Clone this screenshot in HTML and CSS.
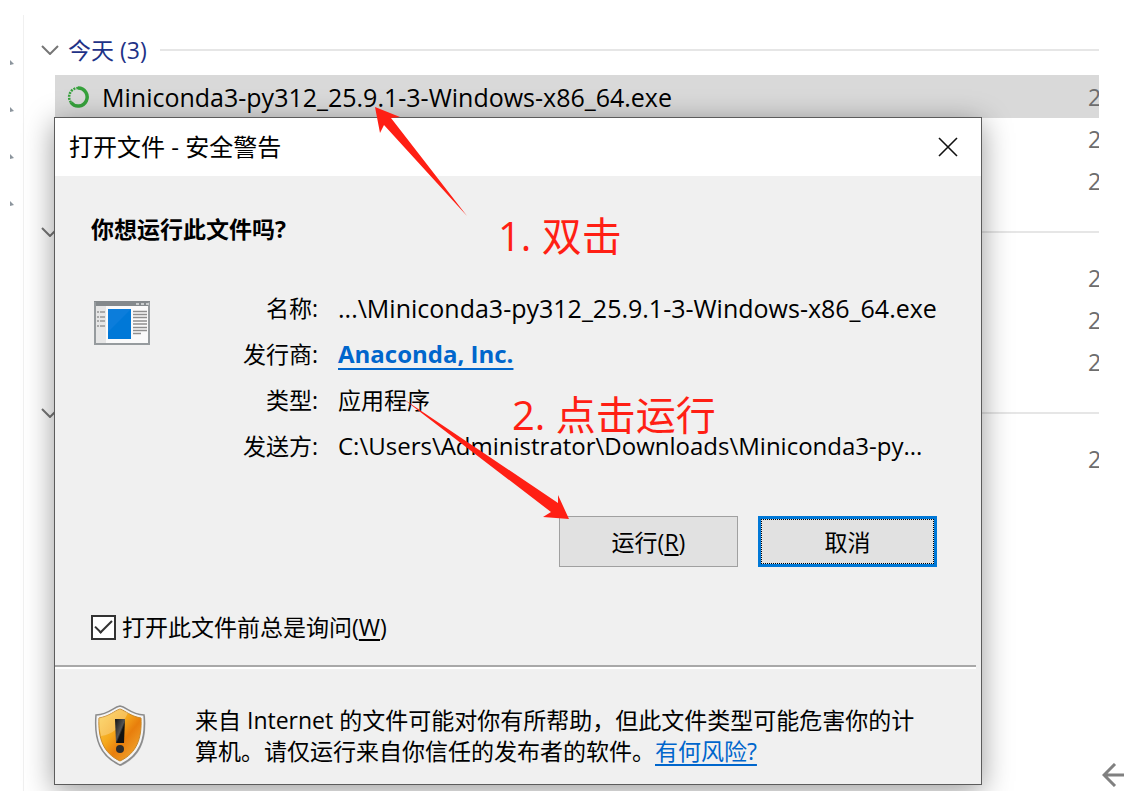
FILE: index.html
```html
<!DOCTYPE html>
<html lang="zh-CN">
<head>
<meta charset="utf-8">
<title>打开文件 - 安全警告</title>
<link rel="stylesheet" href="styles.css">
</head>
<body>
<div class="page">
  <main class="explorer">
    <nav class="tree" aria-label="导航">
      <svg class="tree-mark" viewBox="0 0 4 6"><path d="M0 0L4 4L0 5Z"/></svg>
      <svg class="tree-mark" viewBox="0 0 4 6"><path d="M0 0L4 4L0 5Z"/></svg>
      <svg class="tree-mark" viewBox="0 0 4 6"><path d="M0 0L4 4L0 5Z"/></svg>
      <svg class="tree-mark" viewBox="0 0 4 6"><path d="M0 0L4 4L0 5Z"/></svg>
    </nav>
    <section class="files">
      <h2 class="group">
        <svg class="chevron" viewBox="0 0 18 10"><path d="M1 1L9 9L17 1"/></svg>
        <span>今天 (3)</span>
      </h2>
      <div class="row selected">
        <svg class="spinner" viewBox="0 0 24 24">
          <path d="M12 3A9 9 0 1 1 5 17.500" stroke-width="3.500"/>
          <path d="M5 17.500A9 9 0 0 1 12 3" stroke-width="2.500" stroke-dasharray="2 1"/>
        </svg>
        <span class="name">Miniconda3-py312_25.9.1-3-Windows-x86_64.exe</span>
        <span class="date">2</span>
      </div>
      <div class="row"><span class="date">2</span></div>
      <div class="row"><span class="date">2</span></div>
      <h2 class="group">
        <svg class="chevron" viewBox="0 0 18 10"><path d="M1 1L9 9L17 1"/></svg>
      </h2>
      <div class="row"><span class="date">2</span></div>
      <div class="row"><span class="date">2</span></div>
      <div class="row"><span class="date">2</span></div>
      <h2 class="group">
        <svg class="chevron" viewBox="0 0 18 10"><path d="M1 1L9 9L17 1"/></svg>
      </h2>
      <div class="row"><span class="date">2</span></div>
    </section>

    <section class="dialog" role="dialog" aria-labelledby="dialog-title">
      <header class="titlebar">
        <h1 class="title" id="dialog-title">打开文件 - 安全警告</h1>
        <button class="close" type="button" aria-label="关闭">
          <svg viewBox="0 0 20 20"><path d="M1 1L19 19M19 1L1 19" stroke-width="1.600"/></svg>
        </button>
      </header>
      <div class="content">
        <p class="question">你想运行此文件吗?</p>
        <div class="info">
          <svg class="app-icon" viewBox="0 0 56 44">
            <rect x="0.500" y="0.500" width="55" height="43" fill="#fafafa" stroke="#8a8f93"/>
            <rect x="1" y="5" width="11" height="37" fill="#e6e6e6"/>
            <rect width="56" height="5" fill="#84898c"/>
            <path d="M1 1V43H55V1" fill="none" stroke="#969b9e" stroke-width="2"/>
            <path d="M42 3h3M47 3h3M52 3h3" stroke="#c9cccd" stroke-width="2"/>
            <path d="M3 11h2M6 11h5M3 16h2M6 16h5M3 20h2M6 20h5M3 25h2M6 25h5" stroke="#969696" stroke-width="1.500"/>
            <rect x="14" y="8" width="23" height="30" fill="#0078d7"/>
            <path d="M14 8H37L14 31Z" fill="#0c7ddb"/>
            <path d="M39 10.500h14M39 13.500h14M39 16.500h14M39 20h14M39 23h14M39 26.500h14M39 29.500h14M39 32.500h8" stroke="#8e8e8e" stroke-width="1.300"/>
          </svg>
          <dl class="details">
            <dt>名称:</dt><dd class="name">...\Miniconda3-py312_25.9.1-3-Windows-x86_64.exe</dd>
            <dt>发行商:</dt><dd><a class="publisher" href="#">Anaconda, Inc.</a></dd>
            <dt>类型:</dt><dd>应用程序</dd>
            <dt>发送方:</dt><dd class="path">C:\Users\Administrator\Downloads\Miniconda3-py...</dd>
          </dl>
        </div>
        <div class="actions">
          <button class="button" type="button">运行(<u>R</u>)</button>
          <button class="button primary" type="button">取消</button>
        </div>
        <label class="ask"><input class="check" type="checkbox" checked><span>打开此文件前总是询问(<u>W</u>)</span></label>
      </div>
      <footer class="warning">
        <svg class="shield" viewBox="0 0 54 62">
          <defs>
            <linearGradient id="gold" x1="0" y1="0" x2="1" y2="1">
              <stop offset="0" stop-color="#fbd04a"/><stop offset="0.400" stop-color="#f5a81c"/>
              <stop offset="0.600" stop-color="#e87e0c"/><stop offset="1" stop-color="#f4b43c"/>
            </linearGradient>
            <linearGradient id="ink" x1="0" y1="0" x2="1" y2="1">
              <stop offset="0" stop-color="#111"/><stop offset="0.500" stop-color="#555"/><stop offset="0.600" stop-color="#111"/>
            </linearGradient>
          </defs>
          <path d="M26 1C19 2 16 9 2 10C0 34 6 51 26 60C46 51 52 34 50 10C36 9 33 2 26 1Z" fill="#aaa" transform="translate(1 1)"/>
          <path d="M26 1C19 2 16 9 2 10C0 34 6 51 26 60C46 51 52 34 50 10C36 9 33 2 26 1Z" fill="#f4f4f4" stroke="#8b8b8b" stroke-width="1.500"/>
          <path d="M26 4C20 6 16 11 5 13C4 33 9 48 26 56C43 48 48 33 47 13C36 11 32 6 26 4Z" fill="url(#gold)" stroke="#c88a2c"/>
          <path d="M26 4C20 6 16 11 5 13Q5 22 7 31Q24 29 34 8Q29 6 26 4Z" fill="#fff" opacity="0.250"/>
          <path d="M21 14H31L30 38H22Z" fill="url(#ink)"/>
          <circle cx="26" cy="44" r="4" fill="#2c2c2c"/>
        </svg>
        <p class="warning-text">来自 Internet 的文件可能对你有所帮助，但此文件类型可能危害你的计算机。请仅运行来自你信任的发布者的软件。<a class="risk" href="#">有何风险?</a></p>
      </footer>
    </section>

    <svg class="arrow arrow-open" viewBox="0 0 92 110"><path d="M0 0L25 10L16 11L92 109L9 18L5 26Z"/></svg>
    <p class="note note-open">1. 双击</p>
    <svg class="arrow arrow-run" viewBox="0 0 170 121"><path d="M2 0L158 105L158 97L169 121L143 119L151 114Z"/></svg>
    <p class="note note-run">2. 点击运行</p>
  </main>
  <aside class="gutter">
    <svg class="back" viewBox="0 0 22 24"><path d="M22 12H2M13 1L2 12L13 23"/></svg>
  </aside>
</div>
</body>
</html>
```
FILE: styles.css
```css
*, *::before, *::after { box-sizing: border-box; }

body {
  margin: 0;
  background: #fff;
  color: #000;
  font: 23px/32px "Open Sans", "Noto Sans CJK SC", sans-serif;
}

h1, h2, p, dl, dd { margin: 0; font-size: inherit; font-weight: normal; }
svg { display: block; flex: none; }

.page { display: flex; min-height: 100vh; padding: 15px 0 7px; }
.explorer { position: relative; display: flex; flex: 1; min-width: 0; overflow: hidden; }

.tree {
  display: flex;
  flex-direction: column;
  gap: 41px;
  width: 24px;
  padding: 45px 0 0 10px;
  border-right: 1px solid #f0f0f0;
}
.tree-mark { width: 4px; height: 6px; fill: #8c959d; }

.files { flex: 1; min-width: 0; padding-top: 5px; }
.group {
  display: flex;
  align-items: center;
  gap: 9px;
  height: 55px;
  padding: 4px 0 0 17px;
  color: #1e3287;
}
.group::after { content: ""; flex: 1; height: 2px; margin-left: 4px; background: #e6e6e6; }
.chevron { width: 18px; height: 10px; fill: none; stroke: #767676; stroke-width: 2; }

.row { display: flex; align-items: center; height: 42px; margin-left: 31px; padding-left: 11px; }
.selected { height: 43px; background: #d9d9d9; }
.spinner { width: 24px; height: 24px; margin-right: 12px; fill: none; stroke: #36a13c; }
.name { font-size: 25px; }
.date { width: 11px; margin-left: auto; overflow: hidden; color: #6d6d6d; }

.dialog {
  position: absolute;
  top: 102px;
  right: 117px;
  left: 54px;
  border: 1px solid #5c5c5c;
  background: #f0f0f0;
  box-shadow: 0 6px 28px rgba(0, 0, 0, 0.4);
}
.titlebar { display: flex; align-items: center; height: 58px; padding: 0 23px 0 14px; background: #fff; }
.title { flex: 1; font-size: 24px; }
.close { padding: 0; border: 0; background: none; }
.close svg { width: 20px; height: 20px; fill: none; stroke: #111; }

.content { padding: 37px 44px 22px 36px; }
.question { font-weight: bold; }
.info { display: flex; margin-top: 40px; }
.app-icon { width: 56px; height: 44px; margin: 16px 0 0 3px; }
.details {
  display: grid;
  grid-template-columns: 168px 1fr;
  column-gap: 20px;
  flex: 1;
  line-height: 46px;
  white-space: nowrap;
}
.details dt { text-align: right; }
.publisher { color: #0066cc; font-size: 24px; font-weight: bold; text-underline-offset: 5px; text-decoration-thickness: 2px; }
.path { font-size: 24px; }

.actions { display: flex; justify-content: flex-end; gap: 20px; margin-top: 47px; }
.button {
  width: 179px;
  height: 51px;
  padding: 0;
  border: 1px solid #a0a0a0;
  background: #e1e1e1;
  color: #000;
  font: inherit;
}
.primary { border: 3px solid #0078d7; outline: 1px dotted #000; outline-offset: -4px; }
u { text-underline-offset: 3px; text-decoration-thickness: 2px; }

.ask { display: flex; align-items: center; gap: 6px; margin-top: 44px; }
.check {
  appearance: none;
  display: grid;
  place-items: center;
  width: 25px;
  height: 25px;
  margin: 0;
  border: 2px solid #333;
  background: #fff;
}
.check:checked::before {
  content: "";
  width: 17px;
  height: 9px;
  margin-bottom: 5px;
  border: solid #333;
  border-width: 0 0 2px 2px;
  transform: rotate(-45deg);
}

.warning { display: flex; gap: 47px; padding: 40px 54px 17px 39px; position: relative; }
.warning::before {
  content: "";
  position: absolute;
  top: 0;
  right: 5px;
  left: 0;
  height: 4px;
  border-top: 2px solid #a8a8a8;
  border-bottom: 2px solid #fff;
}
.shield { width: 54px; height: 62px; }
.warning-text { line-height: 31px; }
.risk { color: #0066cc; text-underline-offset: 4px; text-decoration-thickness: 2px; }

.arrow { position: absolute; fill: #ff1f14; }
.arrow-open { top: 92px; left: 375px; width: 92px; height: 110px; }
.arrow-run { top: 383px; left: 400px; width: 170px; height: 121px; }
.note { position: absolute; color: #ff1f14; font-size: 40px; line-height: 48px; white-space: nowrap; }
.note-open { top: 197px; left: 498px; }
.note-run { top: 376px; left: 512px; }

.gutter { display: flex; align-items: flex-end; justify-content: flex-end; width: 25px; }
.back { width: 22px; height: 24px; margin-bottom: 4px; fill: none; stroke: #808080; stroke-width: 3; }
```
